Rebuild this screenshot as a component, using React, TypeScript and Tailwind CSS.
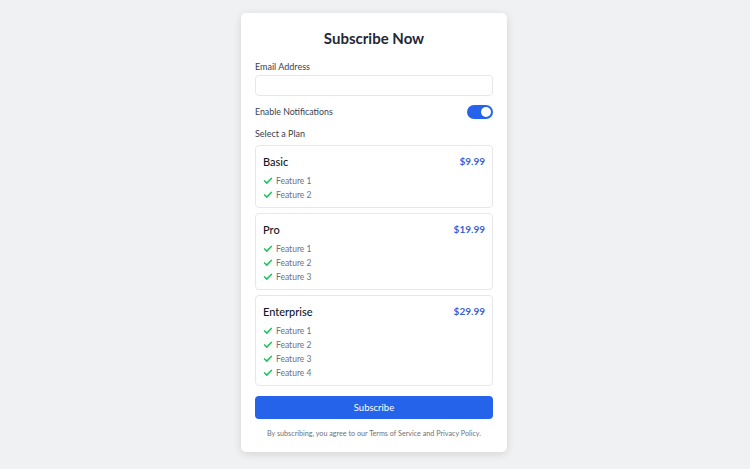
import { Check } from 'lucide-react';

interface Plan {
  name: string;
  price: string;
  features: string[];
}

const plans: Plan[] = [
  { name: 'Basic', price: '$9.99', features: ['Feature 1', 'Feature 2'] },
  { name: 'Pro', price: '$19.99', features: ['Feature 1', 'Feature 2', 'Feature 3'] },
  { name: 'Enterprise', price: '$29.99', features: ['Feature 1', 'Feature 2', 'Feature 3', 'Feature 4'] },
];

export default function App() {
  return (
    <div
      className="min-h-[469px] w-full bg-[#f0f1f3] flex justify-center pt-[13px] pr-[2px]"
      style={{ fontFamily: 'Lato, "Noto Sans", sans-serif' }}
    >
      <div className="w-[266px] h-[439px] bg-white rounded-[5px] shadow-[0_2px_8px_rgba(0,0,0,0.12)] px-[14px] pt-[15px]">
        <h1 className="text-center text-[15px] leading-[20px] font-bold text-[#1f2937]">Subscribe Now</h1>

        {/* Email */}
        <label className="block mt-[13px] text-[9px] leading-[12px] text-[#374151]">Email Address</label>
        <input className="mt-[2px] block w-full h-[21px] border border-[#e5e7eb] rounded-[4px] outline-none" />

        {/* Notifications */}
        <div className="mt-[9px] flex items-center justify-between h-[14px]">
          <span className="text-[8.8px] leading-[12px] text-[#374151]">Enable Notifications</span>
          <div className="w-[26px] h-[14px] rounded-full bg-[#2563eb] flex items-center justify-end pr-[2px]">
            <div className="w-[10px] h-[10px] rounded-full bg-white" />
          </div>
        </div>

        {/* Plans */}
        <div className="mt-[9px] text-[9px] leading-[12px] text-[#374151]">Select a Plan</div>
        <div className="mt-[5px] flex flex-col gap-[5px]">
          {plans.map((plan) => (
            <div key={plan.name} className="border border-[#e5e7eb] rounded-[4px] px-[7px] pt-[8px] pb-[5px]">
              <div className="flex items-center justify-between h-[15px]">
                <span className="text-[11px] leading-[15px] font-medium text-[#111827]">{plan.name}</span>
                <span className="text-[10px] leading-[15px] font-bold text-[#3b63d9]">{plan.price}</span>
              </div>
              <ul className="mt-[5px]">
                {plan.features.map((f) => (
                  <li key={f} className="flex items-center h-[14px] text-[8.5px] leading-[14px] text-[#6b7280]">
                    <Check className="w-[10px] h-[10px] text-[#22c55e] mr-[3px]" strokeWidth={4} />
                    {f}
                  </li>
                ))}
              </ul>
            </div>
          ))}
        </div>

        <button className="mt-[10px] block w-full h-[23px] rounded-[4px] bg-[#2563eb] text-white text-[9.5px] leading-[23px]">
          Subscribe
        </button>
        <p className="mt-[10px] text-center text-[7.2px] leading-[10px] text-[#6b7280]">
          By subscribing, you agree to our Terms of Service and Privacy Policy.
        </p>
      </div>
    </div>
  );
}
